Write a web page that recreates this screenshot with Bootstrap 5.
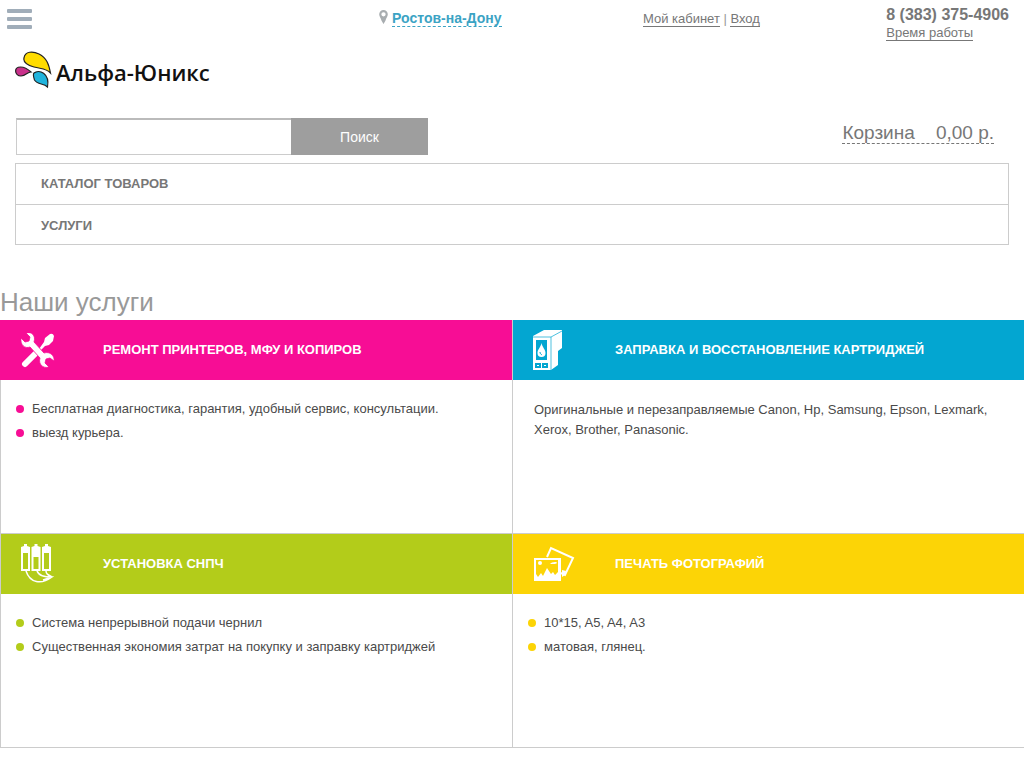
<!DOCTYPE html>
<html lang="ru">
<head>
<meta charset="utf-8">
<meta name="viewport" content="width=device-width, initial-scale=1">
<title>Альфа-Юникс</title>
<link href="https://cdn.jsdelivr.net/npm/bootstrap@5.3.0/dist/css/bootstrap.min.css" rel="stylesheet">
<style>
body{font-family:"Liberation Sans",Arial,sans-serif;font-size:13px;line-height:20px;color:#4a4a4a;background:#fff}
.topbar{display:grid;grid-template-columns:30% 26% 25% 1fr;min-height:50px}
.burger{width:25px;border:0;padding:0;background:none;display:flex;flex-direction:column;gap:4px}
.burger span{height:4px;background:#a0adb9;border-radius:1px}
.burger-cell{padding:9px 7px}
.city-cell{padding-top:10px}
.city{font-size:14px;line-height:16px;font-weight:700;color:#3ba3c4;text-decoration:none;border-bottom:1px dashed #3ba3c4}
.account{color:#999;padding-top:9px}
.plain-link{color:#777;text-decoration:none;border-bottom:1px solid #777;line-height:15px;display:inline-block}
.phone-cell{padding-top:7px}
.phone{font-size:16px;line-height:16px;font-weight:700;color:#777}
.gutter{padding-left:15px;padding-right:15px}
.logo-row{gap:3px}
.brand{font-family:"Open Sans","Noto Sans",sans-serif;font-size:22px;line-height:36px;padding-top:4px;font-weight:600;color:#111;text-decoration:none}
.search-row{padding-top:28px}
.search{width:413px;height:37px;padding-left:1px}
.search .form-control{border:1px solid #ccc;border-top:2px solid #bbb;border-right:0;border-radius:0}
.search .btn{width:137px;background:#9e9e9e;color:#fff;border:0;border-radius:0;font-size:14px;line-height:20px}
.cart-cell{padding:5px 15px 0}
.cart{font-size:19px;line-height:20px;color:#777;text-decoration:none;border-bottom:1px dashed #777;display:inline-block}
.menu .list-group-item{padding:10px 25px;border-color:#ccc;border-radius:0;color:#777;font-weight:700;line-height:20px}
.menu .list-group-item:last-child{padding-top:11px;padding-bottom:8px}
.services{padding-top:39px}
.section-title{font-size:26px;line-height:36px;color:#999;font-weight:400}
.service{min-height:214px;border-left:1px solid #ccc;border-bottom:1px solid #ccc}
.service-head{height:60px;color:#fff;padding-left:20px}
.pink .service-head{margin-left:-1px;padding-left:21px}
.service-icon{width:82px}
.service-icon svg{display:block;fill:#fff}
.service-head h2{font-size:13px;line-height:20px;font-weight:700;margin:0}
.service ul{list-style:none;margin:0;padding:17px 15px}
.service li{line-height:24px;display:flex;align-items:center;gap:8px}
.service li::before{content:"";width:8px;height:8px;border-radius:50%;background:var(--tone)}
.service p{margin:0;padding:20px 21px}
.tone{background:var(--tone)}
.pink{--tone:#f70d95}.blue{--tone:#03a6d1}.lime{--tone:#b3cc1a}.sun{--tone:#fcd406}
</style>
</head>
<body>
<header>
  <div class="topbar">
    <div class="burger-cell"><button class="burger" type="button" aria-label="Меню"><span></span><span></span><span></span></button></div>
    <div class="d-flex justify-content-center align-items-start city-cell">
      <svg class="me-1" width="9" height="14" viewBox="0 0 8 13"><path fill="#a8adb0" fill-rule="evenodd" d="M4 0a4 4 0 0 1 4 4c0 2-1.500 3.500-2.200 6L4 13 2.200 10C1.500 7.500 0 6 0 4a4 4 0 0 1 4-4zm0 2a2 2 0 1 0 0 4 2 2 0 0 0 0-4z"/></svg>
      <a class="city" href="#">Ростов-на-Дону</a>
    </div>
    <div class="text-center account"><a class="plain-link" href="#">Мой кабинет</a> | <a class="plain-link" href="#">Вход</a></div>
    <div class="d-flex justify-content-end gutter"><div class="phone-cell"><div class="phone">8 (383) 375-4906</div><a class="plain-link" href="#">Время работы</a></div></div>
  </div>
  <div class="gutter d-flex align-items-center logo-row">
    <svg width="38" height="38" viewBox="0 0 38 38" stroke="#222" stroke-width="1.200"><path fill="#ffdc00" d="M9 7C10 0 18 0 24 3c8 4 10 11 11.500 19C31 17 26 18 19 16 12 14 8 11 9 7z"/><path fill="#c9308b" d="M.6 20c0-5 8-6 15.400 1-4 0-5 4-10 4-3 0-5.400-2-5.400-5z"/><path fill="#20b4dd" d="M19 22c5-4 16 0 13.500 14-4-4-10-2-13-7-1-3-1.500-6-.5-7z"/></svg>
    <a class="brand" href="#">Альфа-Юникс</a>
  </div>
  <div class="d-flex justify-content-between gutter search-row">
    <form class="search d-flex" role="search"><input class="form-control" type="text" aria-label="Поиск по сайту"><button class="btn flex-shrink-0" type="button">Поиск</button></form>
    <div class="cart-cell"><a class="cart" href="#">Корзина &nbsp;&nbsp; 0,00 р.</a></div>
  </div>
  <nav class="gutter pt-2"><div class="menu list-group"><a class="list-group-item" href="#">КАТАЛОГ ТОВАРОВ</a><a class="list-group-item" href="#">УСЛУГИ</a></div></nav>
</header>
<main class="services">
  <h1 class="section-title mb-0">Наши услуги</h1>
  <div class="row g-0">
    <div class="col-6 pink"><section class="service">
      <div class="service-head tone d-flex align-items-center"><div class="service-icon">
        <svg width="34" height="35" viewBox="0 0 34 35"><path fill="none" stroke="#fff" stroke-width="6" stroke-linecap="round" d="M4 31 14 21"/><path d="M18 16 23 9l1-4 5-4q3-1 4 2l-1 5-4 4-4 1-5 5z"/><path stroke="#f70d95" stroke-width=".8" d="M5 0c6-2 10 3 8 9l10 11c6-2 11 3 10 8l-4-3-4 1-1 4 4 4c-6 2-11-3-9-9L9 14C4 16-1 12 0 5l4 4 4-1 1-4z"/></svg>
      </div><h2>РЕМОНТ ПРИНТЕРОВ, МФУ И КОПИРОВ</h2></div>
      <ul><li>Бесплатная диагностика, гарантия, удобный сервис, консультации.</li><li>выезд курьера.</li></ul>
    </section></div>
    <div class="col-6 blue"><section class="service">
      <div class="service-head tone d-flex align-items-center"><div class="service-icon">
        <svg width="30" height="42" viewBox="0 0 30 42"><path d="M0 7 11 1h18v18l-4 3v14l-7 5H0z"/><path fill="none" stroke="#03a6d1" stroke-width=".7" d="M0 8h18l11-6M18 8v33"/><path fill="#03a6d1" d="M3 11h11v20H3zM2 34h6v5H2zM9 34h6v5H9z"/><path d="M8.500 14c1 5 4 6 4 10a4 4 0 0 1-8 0c0-4 3-5 4-10zM4 36h2v1H4zM11 36h2v1h-2z"/><path fill="none" stroke="#03a6d1" d="M7 23c0 2 1 2 2 3"/></svg>
      </div><h2>ЗАПРАВКА И ВОССТАНОВЛЕНИЕ КАРТРИДЖЕЙ</h2></div>
      <p>Оригинальные и перезаправляемые Canon, Hp, Samsung, Epson, Lexmark, Xerox, Brother, Panasonic.</p>
    </section></div>
    <div class="col-6 lime"><section class="service">
      <div class="service-head tone d-flex align-items-center"><div class="service-icon">
        <svg width="34" height="40" viewBox="0 0 34 40"><path fill-rule="evenodd" d="M0 3 3 2V0h3v2l3 1v24H0zM2 9v16h5V9zM10.500 3l3-1V0h3v2l3 1v24h-9zM12.500 13v12h5V13zM21 3l3-1V0h3v2l3 1v24h-9zM23 9v16h5V9z"/><path fill="none" stroke="#fff" stroke-width="1.500" d="M5 27c4 12 15 14 26 6-8 0-13-1-15-6M25 27c0 3 2 4 6 6l-5-3M22 36l9-3"/></svg>
      </div><h2>УСТАНОВКА СНПЧ</h2></div>
      <ul><li>Система непрерывной подачи чернил</li><li>Существенная экономия затрат на покупку и заправку картриджей</li></ul>
    </section></div>
    <div class="col-6 sun"><section class="service">
      <div class="service-head tone d-flex align-items-center"><div class="service-icon">
        <svg width="42" height="36" viewBox="0 0 42 36"><path fill="none" stroke="#fff" stroke-width="2" d="m14 11 4-9 22 10-8 17-4-2"/><path fill-rule="evenodd" d="M1 12h27v23H1zM3 14v14l2 3 3-4 2 3 4-8 4 6 2-2 2 3 3-3V14z"/><circle cx="7" cy="17" r="2"/><path d="M17 18c1-2 7-3 7-1 0 1-4 1-7 1zM29 24l4 1-1 4-3 2z"/></svg>
      </div><h2>ПЕЧАТЬ ФОТОГРАФИЙ</h2></div>
      <ul><li>10*15, A5, A4, A3</li><li>матовая, глянец.</li></ul>
    </section></div>
  </div>
</main>
<script src="https://cdn.jsdelivr.net/npm/bootstrap@5.3.0/dist/js/bootstrap.bundle.min.js"></script>
</body>
</html>
